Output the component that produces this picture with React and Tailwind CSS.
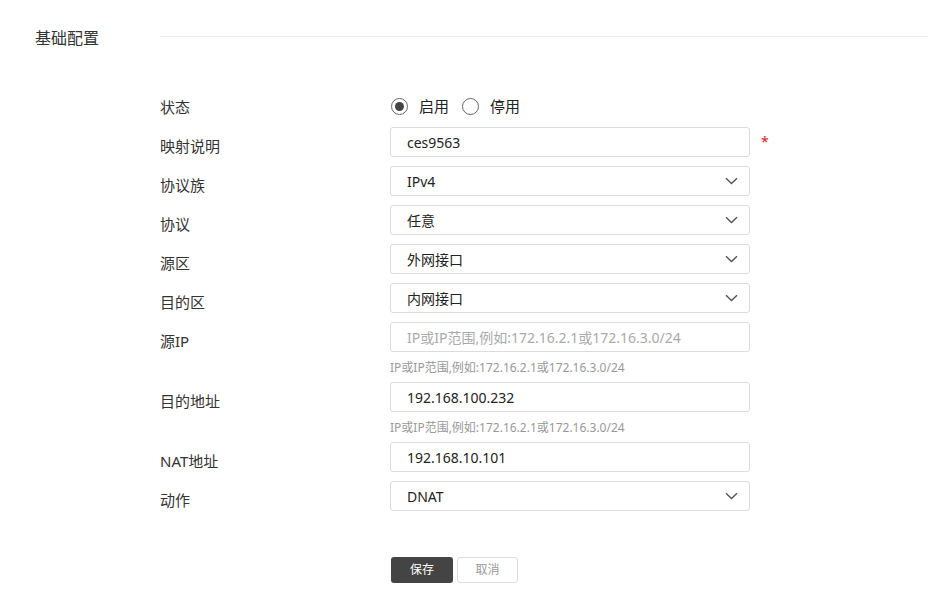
import React from 'react'

const font = { fontFamily: '"Noto Sans", "Noto Sans CJK SC", sans-serif' }

const Chevron = () => (
  <svg width="13" height="8" viewBox="0 0 13 8" fill="none" className="shrink-0">
    <path d="M1 1.2L6.5 6.5L12 1.2" stroke="#555" strokeWidth="1.4" />
  </svg>
)

const Label = ({ children }) => (
  <div className="w-[230px] shrink-0 pt-[8px] text-[15px] leading-[22px] text-[#333]">{children}</div>
)

const Box = ({ children, select, placeholder }) => (
  <div className="w-[360px] h-[30px] shrink-0 flex items-center justify-between pl-4 pr-[11px] border border-[#dcdcdc] rounded-[3px] bg-white">
    {placeholder ? (
      <span className="text-[14px] text-[#aaa]">{placeholder}</span>
    ) : (
      <span className="text-[14px] text-[#222]">{children}</span>
    )}
    {select && <Chevron />}
  </div>
)

const Hint = () => (
  <div className="pl-[230px] pt-[8px] pb-[6px] text-[12px] leading-4 text-[#999]">
    IP或IP范围,例如:172.16.2.1或172.16.3.0/24
  </div>
)

const Row = ({ label, children, extra, mb = 'mb-[9px]' }) => (
  <div className={`flex items-start ${mb}`}>
    <Label>{label}</Label>
    {children}
    {extra}
  </div>
)

const Radio = ({ checked, label }) => (
  <div className="flex items-center">
    <span className="w-[17px] h-[17px] rounded-full border-[1.5px] border-[#666] flex items-center justify-center">
      {checked && <span className="w-[9px] h-[9px] rounded-full bg-[#444]" />}
    </span>
    <span className="ml-[11px] text-[15px] text-[#222]">{label}</span>
  </div>
)

export default function App() {
  return (
    <div className="w-[928px] h-[606px] bg-white" style={font}>
      <div className="flex items-center pt-[27px]">
        <div className="w-[160px] pl-[35px] text-[16px] leading-[22px] text-[#333]">基础配置</div>
        <div className="flex-1 h-px bg-[#ebebeb] -mt-[4px]" />
      </div>

      <div className="pl-[160px] pt-[45px]">
        <div className="flex items-center h-[24px] mb-[9px]">
          <div className="w-[231px] text-[15px] text-[#333] pt-[2px]">状态</div>
          <div className="flex items-center gap-[13px]">
            <Radio checked label="启用" />
            <Radio label="停用" />
          </div>
        </div>

        <Row label="映射说明" extra={<span className="ml-[11px] pt-[4px] text-[14px] text-[#e02020]">*</span>}>
          <Box>ces9563</Box>
        </Row>
        <Row label="协议族"><Box select>IPv4</Box></Row>
        <Row label="协议"><Box select>任意</Box></Row>
        <Row label="源区"><Box select>外网接口</Box></Row>
        <Row label="目的区"><Box select>内网接口</Box></Row>
        <Row label="源IP" mb="mb-0"><Box placeholder="IP或IP范围,例如:172.16.2.1或172.16.3.0/24" /></Row>
        <Hint />
        <Row label="目的地址" mb="mb-0"><Box>192.168.100.232</Box></Row>
        <Hint />
        <Row label="NAT地址"><Box>192.168.10.101</Box></Row>
        <Row label="动作" mb="mb-0"><Box select>DNAT</Box></Row>

        <div className="flex gap-[4px] pl-[231px] pt-[46px]">
          <button className="w-[62px] h-[26px] rounded-[3px] bg-[#444] text-white text-[12px]">保存</button>
          <button className="w-[61px] h-[26px] rounded-[3px] border border-[#ddd] bg-white text-[#999] text-[12px]">取消</button>
        </div>
      </div>
    </div>
  )
}
